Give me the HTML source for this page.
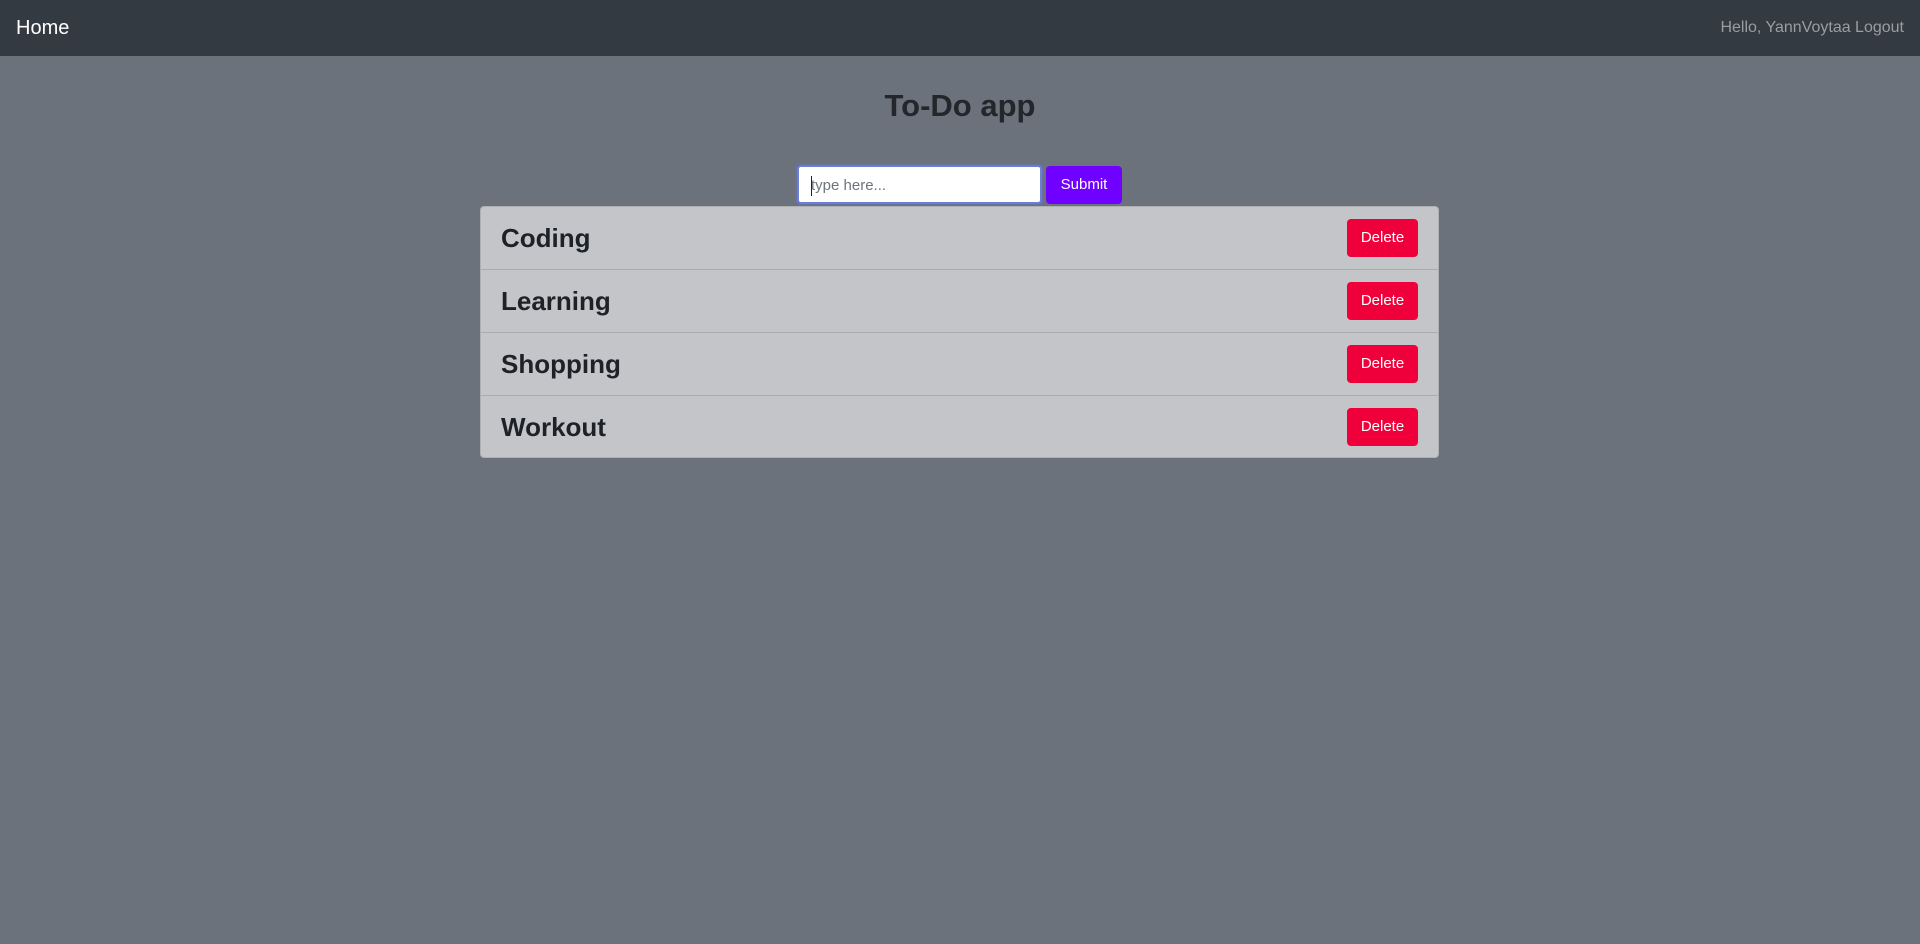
<!DOCTYPE html>
<html><head><style>
*{box-sizing:border-box;margin:0;padding:0}
body{width:1920px;height:944px;background:#6c727c;font-family:"Liberation Sans",Arial,sans-serif;overflow:hidden;position:relative}
.nav{position:absolute;left:0;top:0;width:1920px;height:56px;background:#343a42}
.home{position:absolute;left:16px;top:17px;font-size:20px;color:#fff}
.hello{position:absolute;right:16px;top:19px;font-size:16px;color:#9a9da2}
h1{position:absolute;left:0;width:1920px;top:88px;text-align:center;font-size:31px;font-weight:bold;color:#23272b}
.inp{position:absolute;left:797px;top:165px;width:245px;height:39px;background:#fff;border:2px solid #6b7fd6;border-radius:4px;box-shadow:0 0 0 2px rgba(100,110,220,.35);font-size:15px;color:#6c757d;padding:10px 12px}
.inp:before{content:"";position:absolute;left:12px;top:9px;width:1px;height:20px;background:#222}
.sub{position:absolute;left:1046px;top:166px;width:76px;height:38px;background:#7000ff;border-radius:4px;color:#fff;font-size:15px;text-align:center;line-height:38px}
.list{position:absolute;left:480px;top:206px;width:959px;height:252px;background:#c4c5c9;border:1px solid #aeb0b4;border-radius:4px}
.row{height:63px;border-bottom:1px solid #a9abb0;position:relative}
.row:last-child{border-bottom:none}
.row span{position:absolute;left:20px;top:16px;font-size:26px;font-weight:bold;color:#1e2125}
.del{position:absolute;right:20px;top:12px;width:71px;height:38px;background:#f0003a;border-radius:4px;color:#fff;font-size:15px;text-align:center;line-height:38px}
</style></head><body>
<div class="nav"><div class="home">Home</div><div class="hello">Hello, YannVoytaa Logout</div></div>
<h1>To-Do app</h1>
<div class="inp">type here...</div>
<div class="sub">Submit</div>
<div class="list">
<div class="row"><span>Coding</span><div class="del">Delete</div></div>
<div class="row"><span>Learning</span><div class="del">Delete</div></div>
<div class="row"><span>Shopping</span><div class="del">Delete</div></div>
<div class="row"><span>Workout</span><div class="del">Delete</div></div>
</div>
</body></html>
